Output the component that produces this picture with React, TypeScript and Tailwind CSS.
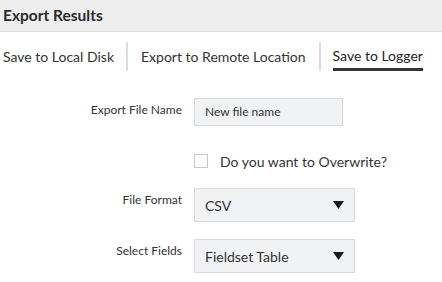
import React from "react";

const Arrow = () => (
  <svg width="11" height="8" viewBox="0 0 11 8" className="absolute right-[10px] top-1/2 -translate-y-1/2">
    <polygon points="0,0 11,0 5.5,8" fill="#1a1a1a" />
  </svg>
);

export default function App() {
  return (
    <div className="w-[442px] h-[282px] bg-white overflow-hidden text-[#333]" style={{ fontFamily: "Lato, 'Open Sans', sans-serif" }}>
      <div className="h-[32px] bg-[#eeeeee] border-b border-[#dcdcdc] flex items-center px-[3px]">
        <span className="text-[15.5px] font-bold text-[#2b2b2b]">Export Results</span>
      </div>
      <div className="flex items-stretch mt-[10px] h-[29px]">
        <div className="pl-[3px] pr-[12px] flex items-center text-[14px]">Save to Local Disk</div>
        <div className="w-[2px] bg-[#dddddd]"></div>
        <div className="px-[13px] flex items-center text-[14px]">Export to Remote Location</div>
        <div className="w-[2px] bg-[#dddddd]"></div>
        <div className="ml-[12px] flex items-center text-[14px] border-b-[3px] border-[#333] text-[#222]">Save to Logger</div>
      </div>
      <div className="mt-[27px] flex flex-col">
        <div className="flex items-start">
          <div className="w-[182px] text-right text-[12px] pt-[3px]">Export File Name</div>
          <div className="ml-[12px] w-[149px] h-[28px] bg-[#f1f2f4] border border-[#dadada] flex items-center pl-[10px] text-[12px]">New file name</div>
        </div>
        <div className="flex items-center mt-[25px] ml-[194px] h-[20px]">
          <div className="w-[14px] h-[14px] border border-[#c8c8c8] bg-white"></div>
          <span className="ml-[12px] text-[14px]">Do you want to Overwrite?</span>
        </div>
        <div className="flex items-start mt-[17px]">
          <div className="w-[182px] text-right text-[12px] pt-[3px]">File Format</div>
          <div className="relative ml-[12px] w-[161px] h-[34px] bg-[#f1f2f4] border border-[#dadada] flex items-center pl-[10px] text-[14px]">
            CSV
            <Arrow />
          </div>
        </div>
        <div className="flex items-start mt-[17px]">
          <div className="w-[182px] text-right text-[12px] pt-[3px]">Select Fields</div>
          <div className="relative ml-[12px] w-[161px] h-[34px] bg-[#f1f2f4] border border-[#dadada] flex items-center pl-[10px] text-[14px]">
            Fieldset Table
            <Arrow />
          </div>
        </div>
      </div>
    </div>
  );
}
